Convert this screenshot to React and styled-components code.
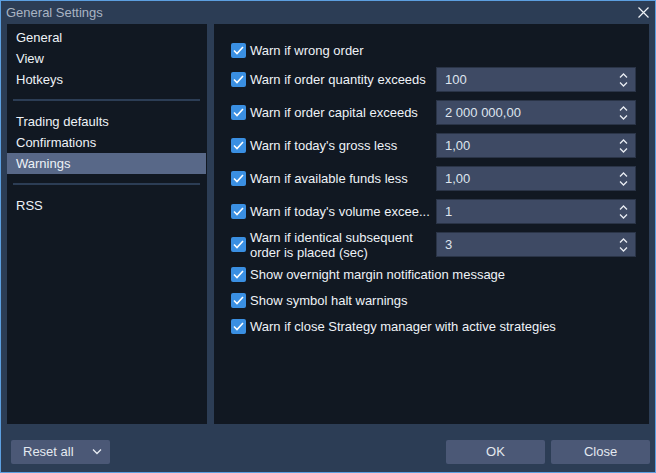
import React from 'react';
import styled, { createGlobalStyle } from 'styled-components';

const GlobalStyle = createGlobalStyle`
  html, body {
    margin: 0;
    padding: 0;
    background: #2c3d55;
  }
  * {
    box-sizing: border-box;
  }
`;

const Window = styled.div`
  width: 656px;
  height: 473px;
  border: 1px solid #5c9fe0;
  background: #2c3d55;
  display: flex;
  flex-direction: column;
  font-family: 'Liberation Sans', Arial, sans-serif;
  font-size: 13px;
  color: #e4e9f0;
`;

const TitleBar = styled.div`
  height: 23px;
  display: flex;
  align-items: center;
  justify-content: space-between;
  padding: 0 6px 0 5px;
  color: #a9b4c3;
`;

const Body = styled.div`
  height: 400px;
  display: flex;
  gap: 7px;
  padding: 0 6px;
`;

const Nav = styled.div`
  width: 200px;
  background: #111822;
  padding-top: 3px;
  display: flex;
  flex-direction: column;
`;

const NavItem = styled.div`
  height: 21px;
  line-height: 21px;
  padding-left: 9px;
  margin-right: 1px;
  background: ${p => (p.$active ? '#586888' : 'transparent')};
  color: #eef2f7;
`;

const NavSep = styled.div`
  height: 2px;
  background: #2c3d55;
  margin: 9px 7px 10px 6px;
`;

const Content = styled.div`
  flex: 1;
  background: #111822;
  padding: 13px 0 0 17px;
  display: flex;
  flex-direction: column;
`;

const Row = styled.div`
  display: flex;
  align-items: center;
  height: ${p => p.$h}px;
`;

const Box = styled.span`
  width: 15px;
  height: 15px;
  border-radius: 2px;
  background: #3a8fe2;
  display: inline-flex;
  align-items: center;
  justify-content: center;
  margin-right: 4px;
  flex-shrink: 0;
`;

const Label = styled.span`
  width: ${p => (p.$fixed ? '181px' : 'auto')};
  margin-right: ${p => (p.$fixed ? '5px' : '0')};
  white-space: ${p => (p.$wrap ? 'normal' : 'nowrap')};
  line-height: 15px;
  color: #eef2f7;
`;

const Field = styled.div`
  width: 200px;
  height: 25px;
  background: #3e4a64;
  border: 1px solid #2a3447;
  display: flex;
  align-items: center;
  justify-content: space-between;
  padding: 0 7px 0 8px;
  color: #dfe5ee;
`;

const Spin = styled.div`
  display: flex;
  flex-direction: column;
  gap: 4px;
`;

const Footer = styled.div`
  flex: 1;
  display: flex;
  align-items: center;
  justify-content: space-between;
  padding: 7px 5px 0 10px;
`;

const Button = styled.div`
  width: 99px;
  height: 24px;
  border-radius: 2px;
  background: #4b5876;
  color: #e4e9f0;
  display: flex;
  align-items: center;
  justify-content: ${p => (p.$split ? 'space-between' : 'center')};
  padding: ${p => (p.$split ? '0 8px 0 12px' : '0')};
`;

const Buttons = styled.div`
  display: flex;
  gap: 6px;
`;

const Check = () => (
  <Box>
    <svg width="11" height="9" viewBox="0 0 11 9">
      <path d="M1 4.5 L4 7.5 L10 1" fill="none" stroke="#fff" strokeWidth="1.6" />
    </svg>
  </Box>
);

const Chev = ({ up }) => (
  <svg width="9" height="5" viewBox="0 0 9 5">
    <path d={up ? 'M1 4.5 L4.5 1 L8 4.5' : 'M1 0.5 L4.5 4 L8 0.5'} fill="none" stroke="#e8ecf2" strokeWidth="1.3" />
  </svg>
);

const Spinner = ({ value }) => (
  <Field>
    <span>{value}</span>
    <Spin>
      <Chev up />
      <Chev />
    </Spin>
  </Field>
);

const rows = [
  { label: 'Warn if wrong order', h: 26 },
  { label: 'Warn if order quantity exceeds', value: '100', h: 33 },
  { label: 'Warn if order capital exceeds', value: '2 000 000,00', h: 33 },
  { label: "Warn if today's gross less", value: '1,00', h: 33 },
  { label: 'Warn if available funds less', value: '1,00', h: 33 },
  { label: "Warn if today's volume excee...", value: '1', h: 33 },
  { label: 'Warn if identical subsequent order is placed (sec)', value: '3', h: 33, wrap: true },
  { label: 'Show overnight margin notification message', h: 26 },
  { label: 'Show symbol halt warnings', h: 26 },
  { label: 'Warn if close Strategy manager with active strategies', h: 26 },
];

const App = () => (
  <>
    <GlobalStyle />
    <Window>
      <TitleBar>
        <span>General Settings</span>
        <svg width="11" height="11" viewBox="0 0 11 11">
          <path d="M0.5 0.5 L10.5 10.5 M10.5 0.5 L0.5 10.5" stroke="#f0f3f7" strokeWidth="1.2" />
        </svg>
      </TitleBar>
      <Body>
        <Nav>
          <NavItem>General</NavItem>
          <NavItem>View</NavItem>
          <NavItem>Hotkeys</NavItem>
          <NavSep />
          <NavItem>Trading defaults</NavItem>
          <NavItem>Confirmations</NavItem>
          <NavItem $active>Warnings</NavItem>
          <NavSep />
          <NavItem>RSS</NavItem>
        </Nav>
        <Content>
          {rows.map((r, i) => (
            <Row key={i} $h={r.h}>
              <Check />
              <Label $fixed={!!r.value} $wrap={r.wrap}>{r.label}</Label>
              {r.value && <Spinner value={r.value} />}
            </Row>
          ))}
        </Content>
      </Body>
      <Footer>
        <Button $split>
          <span>Reset all</span>
          <svg width="10" height="6" viewBox="0 0 10 6">
            <path d="M1 0.5 L5 4.5 L9 0.5" fill="none" stroke="#e8ecf2" strokeWidth="1.3" />
          </svg>
        </Button>
        <Buttons>
          <Button>OK</Button>
          <Button>Close</Button>
        </Buttons>
      </Footer>
    </Window>
  </>
);

export default App;
